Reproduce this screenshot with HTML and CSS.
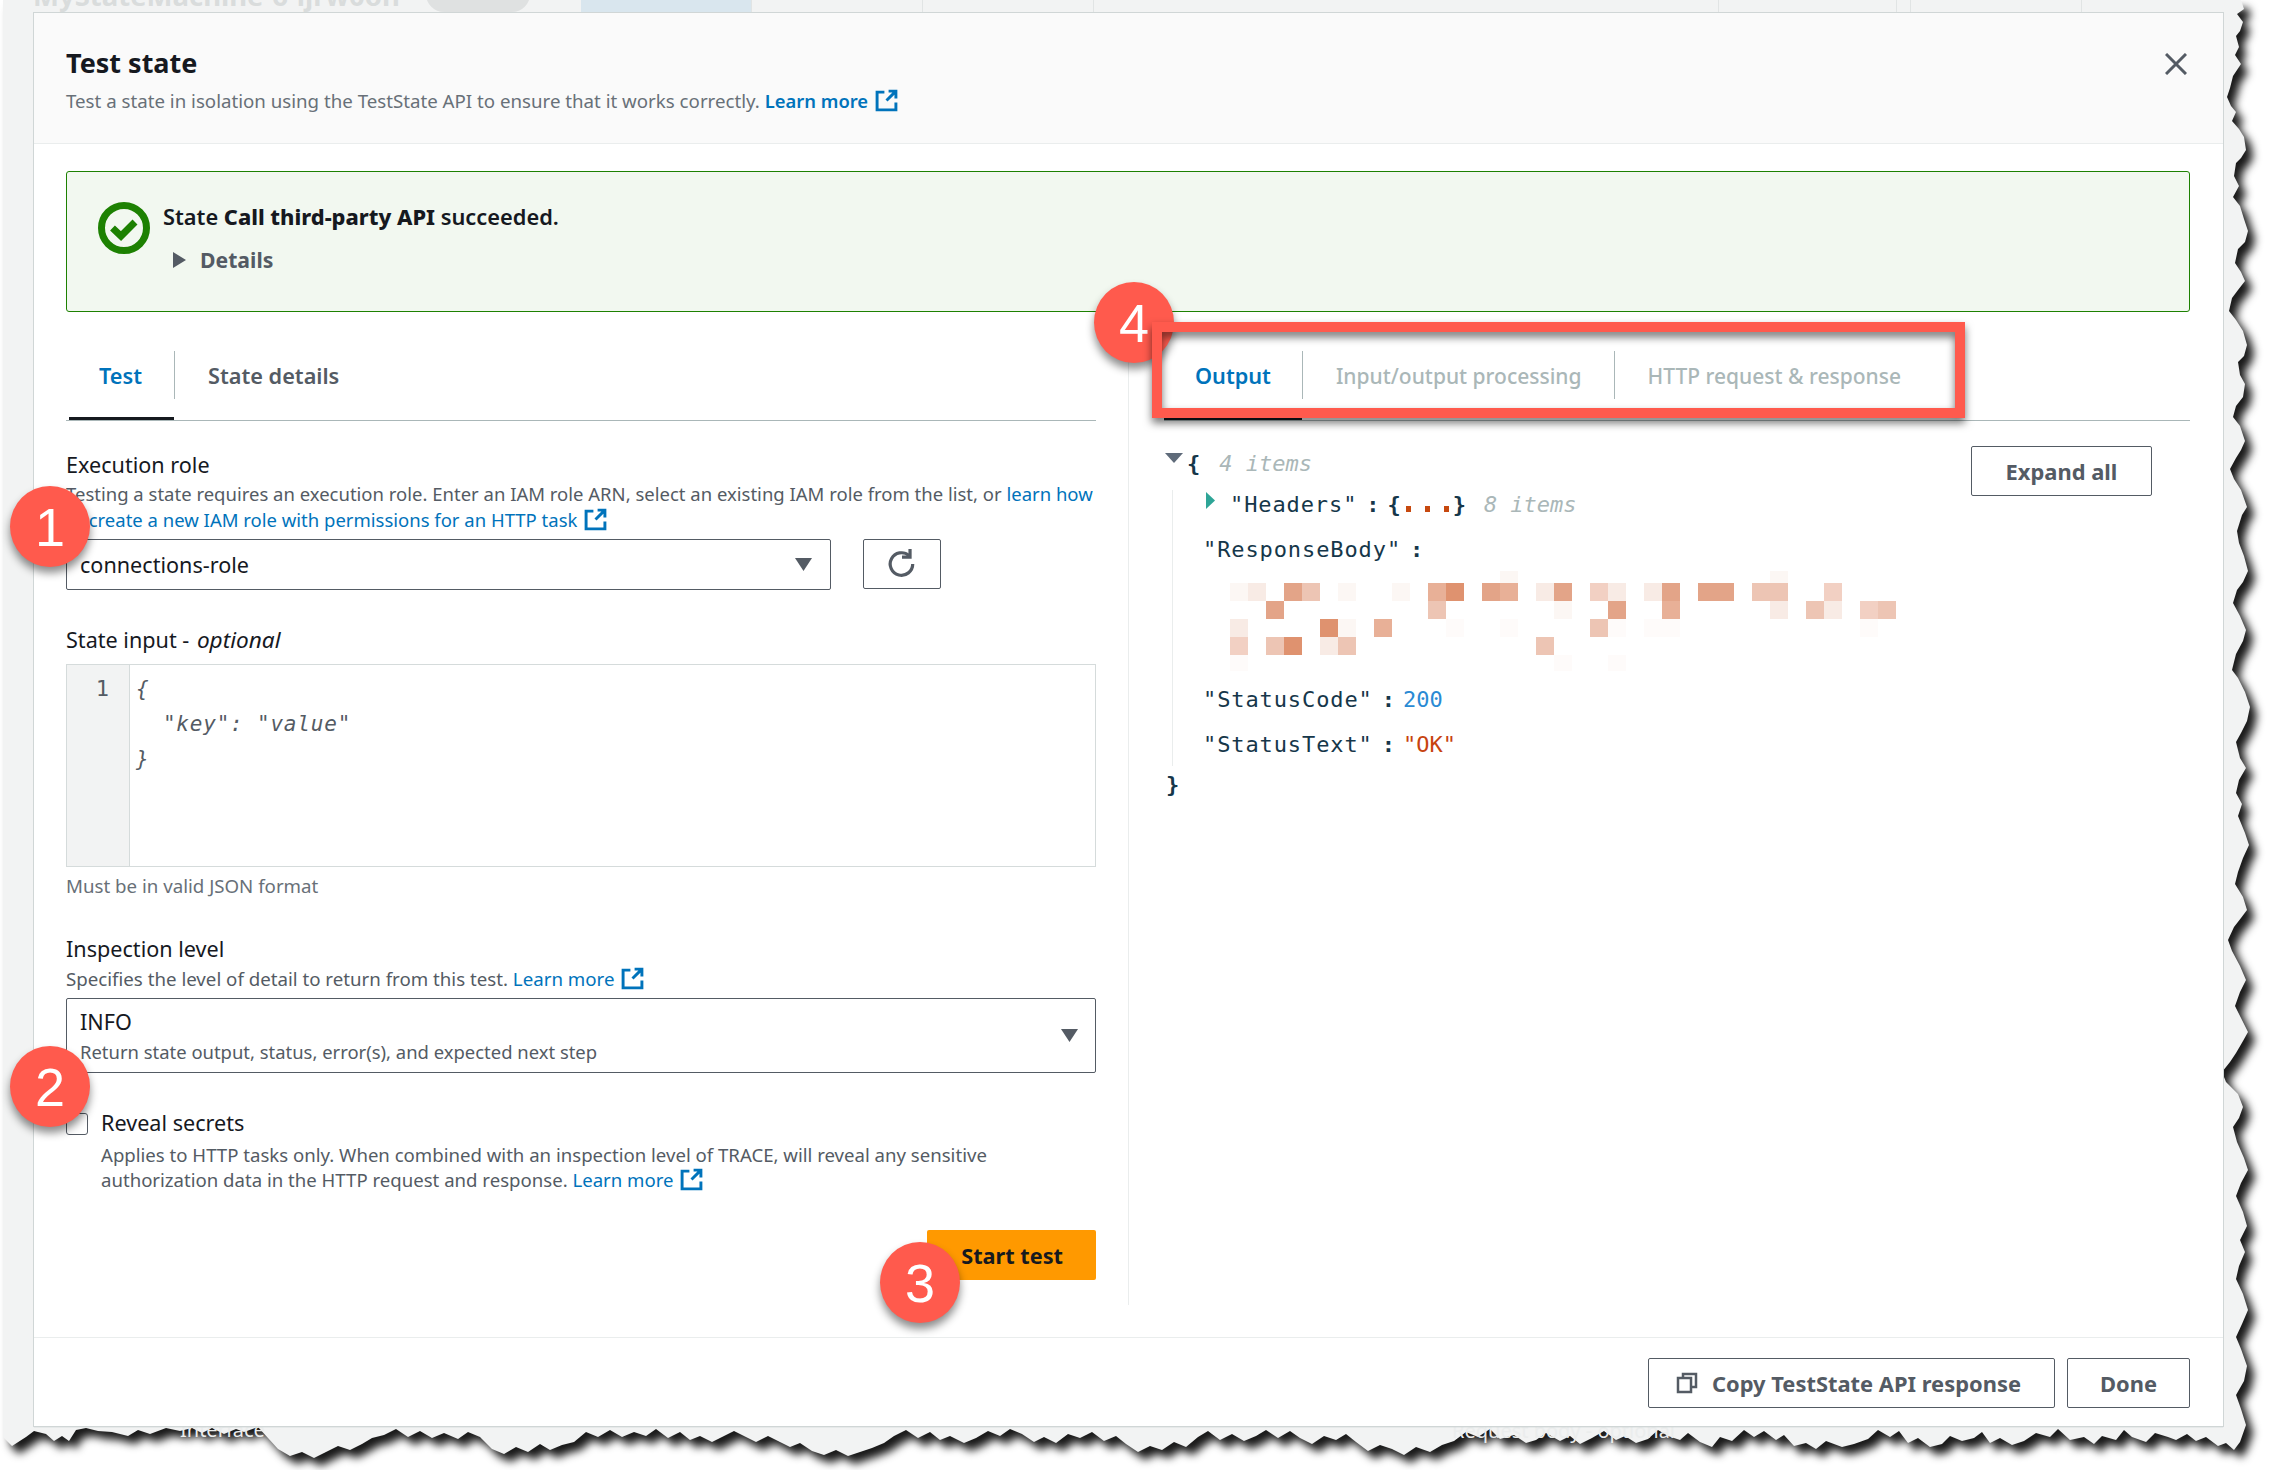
FILE: index.html
```html
<!DOCTYPE html>
<html lang="en">
<head>
  <meta charset="UTF-8" />
  <title>Test state</title>
  <link rel="stylesheet" href="styles.css">
</head>

<body>
<div id="shot">

  <!-- Torn paper edge behind everything -->
  <svg class="torn" width="2274" height="1470" viewBox="0 0 2274 1470">
    <path class="torn-paper" d="M3 0 L2241 0 2244 9 2237 14 2243 22 2240 31 2236 36 2239 47 2235 55 2241 64 2233 76 2230 88 2227 97 2231 106 2236 112 2232 121 2239 129 2244 137 2246 150 2241 158 2236 163 2234 176 2239 186 2233 197 2240 206 2244 219 2248 231 2245 242 2238 249 2235 263 2241 272 2245 281 2238 290 2232 298 2229 311 2236 320 2243 331 2247 345 2244 356 2238 362 2240 375 2245 384 2243 397 2236 406 2233 417 2240 426 2245 441 2241 450 2236 458 2230 469 2234 479 2241 490 2247 507 2242 515 2237 531 2239 543 2244 556 2248 571 2243 582 2237 590 2233 603 2240 616 2246 630 2243 641 2236 654 2232 670 2238 678 2245 692 2250 707 2247 721 2241 733 2236 742 2240 758 2246 768 2239 780 2236 793 2242 804 2238 816 2245 833 2249 845 2243 858 2238 872 2235 884 2243 897 2247 910 2241 918 2234 927 2228 940 2232 951 2240 966 2246 980 2240 992 2235 1006 2241 1018 2248 1032 2243 1041 2236 1053 2230 1062 2222 1072 2226 1082 2238 1094 2243 1107 2239 1118 2233 1127 2237 1142 2244 1158 2248 1170 2241 1183 2236 1196 2243 1212 2247 1226 2240 1240 2245 1252 2239 1266 2236 1279 2243 1294 2248 1310 2242 1324 2236 1337 2241 1349 2247 1366 2244 1381 2236 1395 2241 1409 2246 1425 2240 1442 2234 1450 2226 1443 2218 1446 2206 1437 2196 1441 2187 1434 2176 1440 2168 1437 2155 1433 2146 1442 2132 1437 2124 1430 2116 1440 2102 1436 2094 1444 2084 1437 2070 1440 2058 1429 2050 1437 2036 1433 2024 1441 2012 1445 2000 1438 1990 1443 1982 1432 1974 1438 1962 1441 1950 1436 1942 1444 1930 1447 1918 1438 1908 1443 1899 1431 1890 1437 1878 1430 1868 1439 1854 1444 1842 1447 1826 1441 1816 1449 1806 1443 1794 1446 1784 1435 1776 1440 1764 1431 1754 1437 1744 1430 1732 1441 1720 1437 1712 1447 1700 1442 1688 1433 1680 1440 1668 1436 1658 1430 1648 1439 1636 1443 1625 1436 1616 1440 1604 1431 1592 1438 1580 1444 1570 1436 1560 1441 1546 1433 1536 1440 1526 1443 1514 1435 1500 1439 1490 1429 1478 1437 1466 1432 1454 1441 1442 1445 1430 1452 1416 1447 1404 1455 1392 1449 1380 1445 1368 1451 1356 1442 1346 1434 1336 1440 1324 1436 1312 1444 1300 1438 1290 1431 1278 1438 1266 1430 1256 1436 1244 1441 1232 1434 1220 1440 1208 1431 1198 1437 1186 1447 1174 1442 1162 1450 1150 1446 1138 1452 1126 1444 1116 1436 1104 1441 1092 1432 1080 1438 1068 1434 1056 1443 1044 1437 1034 1442 1022 1434 1010 1429 1000 1436 988 1431 976 1438 964 1443 950 1436 940 1440 930 1432 918 1438 906 1430 894 1436 884 1443 872 1448 860 1452 848 1456 836 1450 824 1455 812 1451 800 1443 790 1447 778 1441 768 1436 756 1442 746 1437 734 1431 722 1437 712 1442 700 1436 690 1440 680 1432 668 1438 656 1429 646 1436 634 1432 622 1437 610 1430 598 1437 586 1432 574 1442 562 1445 550 1450 540 1444 528 1452 516 1447 504 1454 492 1449 480 1437 468 1432 458 1439 444 1433 432 1438 420 1431 408 1437 396 1429 384 1435 372 1438 362 1444 350 1450 338 1446 326 1452 314 1458 302 1452 290 1456 278 1449 268 1438 258 1427 244 1432 236 1429 224 1434 212 1428 202 1433 192 1428 180 1431 166 1428 150 1434 138 1430 128 1436 112 1432 98 1431 86 1428 76 1430 69 1441 62 1436 54 1441 46 1434 34 1431 26 1437 12 1446 3 1437 Z"/>
  </svg>

  <!-- Dimmed page behind the modal -->
  <div class="page-bar">
    <div class="page-title">MyStateMachine-6-ijrw0on</div>
    <div class="page-pill">Standard</div>
    <div class="page-tab active"></div>
    <div class="page-tab"></div>
    <div class="page-tab"></div>
    <div class="page-tab wide"></div>
    <div class="page-tab wider"></div>
    <div class="page-tab slim"></div>
    <div class="page-tab"></div>
  </div>
  <div class="page-under under-left">Interface</div>
  <div class="page-under under-right">Request body - optional</div>

  <div class="modal">
    <div class="modal-head">
      <div class="head-text">
        <h2 class="modal-title">Test state</h2>
        <p class="modal-sub">Test a state in isolation using the TestState API to ensure that it works correctly. <a class="link strong">Learn more <svg class="ext" viewBox="0 0 22 22"><path d="M9 3H2v17h18v-7M13 2h7v7M20 2l-9 9"/></svg></a></p>
      </div>
      <svg class="close" viewBox="0 0 22 22"><path d="M1 1l20 20M21 1L1 21"/></svg>
    </div>

    <div class="modal-body">
      <div class="alert">
        <svg class="alert-icon" viewBox="0 0 52 52"><circle cx="26" cy="26" r="22.5"/><path d="M14.500 26l8.500 8 14-14"/></svg>
        <div>
          <div class="alert-title">State <b>Call third-party API</b> succeeded.</div>
          <div class="alert-details"><svg class="caret-right" viewBox="0 0 13 16"><path d="M0 0l13 8-13 8z"/></svg>Details</div>
        </div>
      </div>

      <div class="columns">
        <!-- Left column: form -->
        <div class="col-left">
          <div class="tabs">
            <div class="tab active first"><span>Test</span></div>
            <div class="tab"><span class="sep">State details</span></div>
          </div>

          <div class="label first-label">Execution role</div>
          <div class="desc desc-role">Testing a state requires an execution role. Enter an IAM role ARN, select an existing IAM role from the list, or <a class="link">learn how to create a new IAM role with permissions for an HTTP task <svg class="ext" viewBox="0 0 22 22"><path d="M9 3H2v17h18v-7M13 2h7v7M20 2l-9 9"/></svg></a></div>
          <div class="role-row">
            <div class="select role-select">
              <span class="value">connections-role</span>
              <svg class="caret-down" viewBox="0 0 17 13"><path d="M0 0h17L8.500 13z"/></svg>
            </div>
            <div class="icon-btn">
              <svg class="refresh" viewBox="0 0 28 28"><path d="M24 14a10.500 10.500 0 1 1-3.500-7.800"/><path d="M21.500 0v7.500H14"/></svg>
            </div>
          </div>

          <div class="label section">State input - <i>optional</i></div>
          <div class="editor">
            <div class="gutter">1</div>
            <pre class="code">{
  "key": "value"
}</pre>
          </div>
          <div class="help">Must be in valid JSON format</div>

          <div class="label section">Inspection level</div>
          <div class="desc">Specifies the level of detail to return from this test. <a class="link">Learn more <svg class="ext" viewBox="0 0 22 22"><path d="M9 3H2v17h18v-7M13 2h7v7M20 2l-9 9"/></svg></a></div>
          <div class="select level-select">
            <div>
              <div class="value">INFO</div>
              <div class="value-desc">Return state output, status, error(s), and expected next step</div>
            </div>
            <svg class="caret-down" viewBox="0 0 17 13"><path d="M0 0h17L8.500 13z"/></svg>
          </div>

          <div class="check-row">
            <div class="checkbox"></div>
            <div>
              <div class="label">Reveal secrets</div>
              <div class="check-desc">Applies to HTTP tasks only. When combined with an inspection level of TRACE, will reveal any sensitive authorization data in the HTTP request and response. <a class="link">Learn more <svg class="ext" viewBox="0 0 22 22"><path d="M9 3H2v17h18v-7M13 2h7v7M20 2l-9 9"/></svg></a></div>
            </div>
          </div>

          <div class="start-row"><button class="btn-primary">Start test</button></div>
        </div>

        <!-- Right column: output -->
        <div class="col-right">
          <div class="tabs">
            <div class="tab active"><span class="pad-output">Output</span></div>
            <div class="tab"><span class="sep muted">Input/output processing</span></div>
            <div class="tab"><span class="sep muted">HTTP request &amp; response</span></div>
          </div>
          <div class="output">
            <div class="tree">
              <div class="row row-root"><svg class="tree-down" viewBox="0 0 18 10"><path d="M0 0h18L9 10z"/></svg><span class="key brace">{</span><span class="count first-count">4 items</span></div>
              <div class="tree-body">
                <div class="row row-headers"><svg class="tree-right" viewBox="0 0 9 17"><path d="M0 0l9 8.500L0 17z"/></svg><span class="key">"Headers"</span><b class="colon">:</b><span class="key brace">{</span><span class="dots"><i></i><i></i><i></i></span><span class="key brace">}</span><span class="count">8 items</span></div>
                <div class="row row-body"><span class="key">"ResponseBody"</span><b class="colon">:</b></div>
                <svg class="redacted" width="666" height="100" viewBox="0 0 666 100">
                  <g class="c-faint"><rect x="270" y="0" width="18" height="12"/><rect x="540" y="0" width="18" height="12"/><rect x="0" y="12" width="18" height="18"/><rect x="108" y="12" width="18" height="18"/><rect x="162" y="12" width="18" height="18"/><rect x="324" y="30" width="18" height="18"/><rect x="108" y="48" width="18" height="18"/></g>
                  <g class="c-vfaint"><rect x="216" y="48" width="18" height="18"/><rect x="270" y="48" width="18" height="18"/><rect x="378" y="48" width="18" height="18"/><rect x="414" y="48" width="36" height="18"/><rect x="630" y="48" width="18" height="18"/><rect x="0" y="84" width="18" height="16"/><rect x="324" y="84" width="18" height="16"/><rect x="378" y="84" width="18" height="16"/></g>
                  <g class="c-light"><rect x="18" y="12" width="18" height="18"/><rect x="306" y="12" width="18" height="18"/><rect x="378" y="12" width="18" height="18"/><rect x="414" y="12" width="18" height="18"/><rect x="540" y="30" width="18" height="18"/><rect x="594" y="30" width="18" height="18"/><rect x="0" y="48" width="18" height="18"/><rect x="90" y="66" width="18" height="18"/></g>
                  <g class="c-midlight"><rect x="360" y="12" width="18" height="18"/><rect x="594" y="12" width="18" height="18"/><rect x="630" y="30" width="18" height="18"/><rect x="0" y="66" width="18" height="18"/></g>
                  <g class="c-mid"><rect x="72" y="12" width="18" height="18"/><rect x="522" y="12" width="36" height="18"/><rect x="198" y="30" width="18" height="18"/><rect x="576" y="30" width="18" height="18"/><rect x="648" y="30" width="18" height="18"/><rect x="360" y="48" width="18" height="18"/><rect x="36" y="66" width="18" height="18"/><rect x="108" y="66" width="18" height="18"/><rect x="306" y="66" width="18" height="18"/></g>
                  <g class="c-midstrong"><rect x="198" y="12" width="18" height="18"/><rect x="270" y="12" width="18" height="18"/><rect x="432" y="30" width="18" height="18"/><rect x="144" y="48" width="18" height="18"/></g>
                  <g class="c-strong"><rect x="54" y="12" width="18" height="18"/><rect x="252" y="12" width="18" height="18"/><rect x="324" y="12" width="18" height="18"/><rect x="432" y="12" width="18" height="18"/><rect x="468" y="12" width="36" height="18"/><rect x="36" y="30" width="18" height="18"/><rect x="378" y="30" width="18" height="18"/></g>
                  <g class="c-deep"><rect x="216" y="12" width="18" height="18"/><rect x="90" y="48" width="18" height="18"/><rect x="54" y="66" width="18" height="18"/></g>
                </svg>
                <div class="row row-code"><span class="key">"StatusCode"</span><b class="colon">:</b><span class="num">200</span></div>
                <div class="row row-text"><span class="key">"StatusText"</span><b class="colon">:</b><span class="str">"OK"</span></div>
              </div>
              <div class="row row-end"><span class="key brace">}</span></div>
            </div>
            <button class="btn expand">Expand all</button>
          </div>
        </div>
      </div>
    </div>

    <div class="modal-foot">
      <button class="btn btn-copy"><svg class="copy" viewBox="0 0 22 22"><path d="M7 6V2h13v13h-5"/><path d="M2 6h13v14H2z"/></svg>Copy TestState API response</button>
      <button class="btn btn-done">Done</button>
    </div>
  </div>

  <!-- Callouts drawn over the screenshot -->
  <div class="callout c1">1</div>
  <div class="callout c2">2</div>
  <div class="callout c3">3</div>
  <div class="callout c4">4</div>
  <div class="callout-box"></div>
</div>
</body>
</html>
```

FILE: styles.css
```css
/* Reset */
html, body {
  margin: 0;
  padding: 0;
  background: #fff;
}

#shot {
  position: relative;
  width: 2274px;
  height: 1470px;
  overflow: hidden;
  font-family: "Noto Sans", "Open Sans", sans-serif;
  font-size: 18.7px;
  color: #16191f;
}

/* Torn edge */
.torn {
  position: absolute;
  top: 0;
  left: 0;
}
.torn-paper {
  fill: #f2f3f3;
  filter: drop-shadow(7px 8px 4px rgba(0, 0, 0, 0.9));
}

/* Page behind the modal */
.page-bar {
  position: absolute;
  top: 0;
  left: 0;
  width: 2232px;
  height: 13px;
  overflow: hidden;
  display: flex;
  align-items: flex-end;
}
.page-title {
  margin: 0 0 2px 33px;
  width: 393px;
  font-size: 27.500px;
  line-height: 30px;
  font-weight: 700;
  color: #d9dcdc;
  white-space: nowrap;
}
.page-pill {
  width: 104px;
  height: 36px;
  border-radius: 18px;
  background: #dfe1e1;
  color: #f0f1f1;
  text-align: center;
  font-size: 18px;
  line-height: 22px;
  margin-bottom: 1px;
}
.page-tab {
  width: 170px;
  height: 13px;
  border-right: 1px solid #e1e4e4;
}
.page-tab.active {
  margin-left: 51px;
  background: #d9e6ee;
}
.page-tab.wide { width: 624px; }
.page-tab.wider { width: 177px; }
.page-tab.slim { width: 13px; }
.page-under {
  position: absolute;
  color: #ebeded;
  font-size: 20px;
  line-height: 20px;
}
.under-left { left: 180px; top: 1420px; }
.under-right { left: 1452px; top: 1421px; }

/* Modal */
.modal {
  position: absolute;
  top: 13px;
  left: 34px;
  width: 2189px;
  height: 1413px;
  display: flex;
  flex-direction: column;
  background: #fff;
  box-shadow: 0 0 0 1px #d0d6d6, 0 1px 1px #aab7b8;
}
.modal-head {
  height: 131px;
  box-sizing: border-box;
  padding: 32px 33px 0 32px;
  display: flex;
  justify-content: space-between;
  background: #fafafa;
  border-bottom: 1px solid #eaeded;
}
.modal-title {
  margin: 0;
  font-size: 27px;
  line-height: 36px;
  font-weight: 700;
}
.modal-sub {
  margin: 7px 0 0;
  line-height: 26px;
  color: #687078;
}
.close {
  width: 22px;
  height: 22px;
  margin: 8px 3px 0 0;
  fill: none;
  stroke: #545b64;
  stroke-width: 3;
}

.link { color: #0073bb; }
.link.strong { font-weight: 600; font-size: 18.400px; }
.ext {
  width: 23px;
  height: 23px;
  margin-left: 2px;
  vertical-align: -4px;
  fill: none;
  stroke: #0073bb;
  stroke-width: 2.800;
}

.modal-body {
  flex: 1;
  padding: 27px 33px 0 32px;
}

/* Alert */
.alert {
  height: 141px;
  box-sizing: border-box;
  padding: 32px 0 0 31px;
  display: flex;
  background: #f2f8f0;
  border: 1px solid #1d8102;
  border-radius: 3px;
}
.alert-icon {
  width: 52px;
  height: 52px;
  margin: -2px 13px 0 0;
  fill: none;
  stroke: #1d8102;
  stroke-width: 7;
}
.alert-title {
  line-height: 26px;
  font-size: 21.800px;
  font-weight: 600;
}
.alert-title b { font-weight: 800; }
.alert-details {
  margin-top: 17px;
  padding-left: 10px;
  line-height: 26px;
  font-size: 21.200px;
  font-weight: 700;
  color: #545b64;
}
.caret-right {
  width: 13px;
  height: 16px;
  margin-right: 14px;
  fill: #545b64;
}

/* Two columns */
.columns {
  margin-top: 38px;
  display: grid;
  grid-template-columns: 1030px 1fr;
  column-gap: 32px;
}
.col-left { min-width: 0; }
.col-right {
  min-height: 955px;
  padding-left: 35px;
  border-left: 1px solid #eaeded;
}

.tabs {
  display: flex;
  height: 71px;
  box-sizing: border-box;
  border-bottom: 1px solid #aab7b8;
}
.tab {
  height: 70px;
  box-sizing: border-box;
  padding-top: 1px;
  font-size: 21.700px;
  line-height: 50px;
  font-weight: 600;
  color: #545b64;
}
.tab span {
  display: block;
  height: 48px;
  padding: 0 32px;
}
.tab .sep { border-left: 1px solid #aab7b8; padding: 0 32px 0 33px; }
.tab .muted {
  color: #aab7b8;
  font-size: 21px;
  font-weight: 500;
}
.tab.active {
  color: #0073bb;
  border-bottom: 3px solid #16191f;
}
.tab.first { margin-left: 3px; }
.tab.first span { padding: 0 32px 0 30px; }
.tab .pad-output { padding: 0 31px; }

/* Form */
.label {
  font-size: 21.600px;
  line-height: 26px;
}
.label i { font-size: 22.600px; margin-left: 2px; }
.first-label { margin-top: 31px; }
.section { margin-top: 37px; }
.desc {
  margin-top: 4px;
  line-height: 26px;
  color: #545b64;
}
.desc-role {
  margin-top: 3px;
  font-size: 18.500px;
}
.role-row {
  margin-top: 6px;
  display: flex;
  gap: 32px;
}
.select {
  box-sizing: border-box;
  display: flex;
  justify-content: space-between;
  align-items: center;
  border: 1px solid #545b64;
  border-radius: 2px;
  padding: 0 17px 0 13px;
}
.role-select {
  width: 765px;
  height: 51px;
}
.role-select .caret-down { margin-right: 1px; }
.level-select {
  margin-top: 6px;
  height: 75px;
}
.value {
  font-size: 21.600px;
  line-height: 31px;
}
.value-desc {
  font-size: 18.450px;
  line-height: 29px;
  color: #545b64;
}
.caret-down {
  width: 17px;
  height: 13px;
  fill: #545b64;
}
.icon-btn {
  width: 78px;
  height: 50px;
  box-sizing: border-box;
  border: 1px solid #545b64;
  border-radius: 2px;
  display: flex;
  align-items: center;
  justify-content: center;
}
.refresh {
  width: 30px;
  height: 30px;
  fill: none;
  stroke: #545b64;
  stroke-width: 3;
}

.editor {
  margin-top: 11px;
  height: 203px;
  box-sizing: border-box;
  display: flex;
  border: 1px solid #d5dbdb;
}
.gutter {
  width: 63px;
  box-sizing: border-box;
  padding: 11px 20px 0 0;
  text-align: right;
  background: #f2f3f3;
  border-right: 1px solid #d5dbdb;
  font-family: "DejaVu Sans Mono", monospace;
  font-size: 22px;
  line-height: 26px;
  color: #545b64;
}
.code {
  margin: 7px 0 0 6px;
  font-family: "DejaVu Sans Mono", monospace;
  font-style: italic;
  font-size: 21px;
  line-height: 35px;
  letter-spacing: 0.8px;
  color: #545b64;
}
.help {
  margin-top: 6px;
  line-height: 26px;
  color: #687078;
}

.check-row {
  margin-top: 37px;
  display: flex;
}
.checkbox {
  width: 22px;
  height: 22px;
  box-sizing: border-box;
  margin: 3px 13px 0 0;
  flex: none;
  border: 1px solid #545b64;
  border-radius: 3px;
}
.check-desc {
  margin-top: 6px;
  font-size: 18.600px;
  line-height: 25px;
  color: #545b64;
}
.start-row {
  margin-top: 38px;
  display: flex;
  justify-content: flex-end;
}

/* Buttons */
button {
  font-family: inherit;
  cursor: pointer;
}
.btn-primary {
  width: 169px;
  height: 50px;
  box-sizing: border-box;
  border: none;
  border-radius: 2px;
  background: #ff9900;
  color: #16191f;
  font-size: 21.700px;
  font-weight: 700;
  text-align: right;
  padding: 0 33px 0 0;
}
.btn {
  height: 50px;
  box-sizing: border-box;
  padding: 0 33px;
  display: flex;
  align-items: center;
  background: #fff;
  border: 1px solid #545b64;
  border-radius: 2px;
  color: #545b64;
  font-size: 21.900px;
  font-weight: 700;
}
.btn-copy { padding: 0 33px 0 27px; }
.btn-done { padding: 0 32px; }
.copy {
  width: 22px;
  height: 22px;
  margin-right: 14px;
  fill: none;
  stroke: #545b64;
  stroke-width: 2.500;
}

/* JSON tree */
.output {
  display: flex;
  justify-content: space-between;
  align-items: flex-start;
  padding-right: 38px;
}
.expand { margin-top: 25px; width: 181px; justify-content: center; padding: 0; }
.tree {
  margin-top: 28px;
  font-family: "DejaVu Sans Mono", monospace;
  font-size: 22px;
  line-height: 30px;
}
.row { display: flex; align-items: center; height: 30px; white-space: pre; }
.key { color: #16374a; letter-spacing: 0.9px; }
.brace { font-weight: 700; }
.colon { margin: 0 8px 0 9px; color: #16374a; }
.count {
  margin-left: 17px;
  font-style: italic;
  color: #aab7b8;
}
.first-count { margin-left: 18px; }
.num { color: #2a8ad4; }
.str { color: #c7430f; }
.dots { display: inline-flex; gap: 14px; align-items: flex-end; height: 14px; margin: 0 4px; }
.dots i { width: 5px; height: 6px; background: #c7490f; }
.tree-down { width: 18px; height: 10px; margin: -12px 4px 0 1px; fill: #5f6b7a; }
.tree-right { width: 9px; height: 17px; margin: -10px 15px 0 3px; fill: #2ea597; }
.tree-body {
  margin-top: 2px;
  margin-left: 8px;
  padding: 0 0 6px 30px;
  border-left: 1px solid #eaeded;
}
.row-headers { margin-top: 11px; }
.row-body { margin-top: 15px; }
.redacted { display: block; margin: 6px 0 0 27px; }
.row-code { margin-top: 14px; }
.row-text { margin-top: 15px; }
.row-end { margin: 4px 0 0 2px; }

.c-faint { fill: #fcf7f4; }
.c-vfaint { fill: #fefbfa; }
.c-light { fill: #f8ebe5; }
.c-midlight { fill: #f2d0c3; }
.c-mid { fill: #edc5b4; }
.c-midstrong { fill: #e8b097; }
.c-strong { fill: #e3a488; }
.c-deep { fill: #df926f; }

/* Footer */
.modal-foot {
  height: 89px;
  box-sizing: border-box;
  padding: 20px 33px 0 0;
  display: flex;
  justify-content: flex-end;
  gap: 12px;
  border-top: 1px solid #eaeded;
}

/* Callouts */
.callout {
  position: absolute;
  width: 80px;
  height: 81px;
  border-radius: 50%;
  background: #ff5a4d;
  color: #fff;
  font-family: "Liberation Sans", sans-serif;
  font-size: 54px;
  line-height: 82px;
  text-align: center;
  box-shadow: 0 6px 8px rgba(0, 0, 0, 0.45);
}
.c1 { left: 10px; top: 486px; }
.c2 { left: 10px; top: 1046px; }
.c3 { left: 880px; top: 1242px; }
.c4 { left: 1094px; top: 282px; }
.callout-box {
  position: absolute;
  left: 1152px;
  top: 322px;
  width: 813px;
  height: 96px;
  box-sizing: border-box;
  border: 10px solid #ff5a4d;
  filter: drop-shadow(0 5px 4px rgba(0, 0, 0, 0.55));
}
```
